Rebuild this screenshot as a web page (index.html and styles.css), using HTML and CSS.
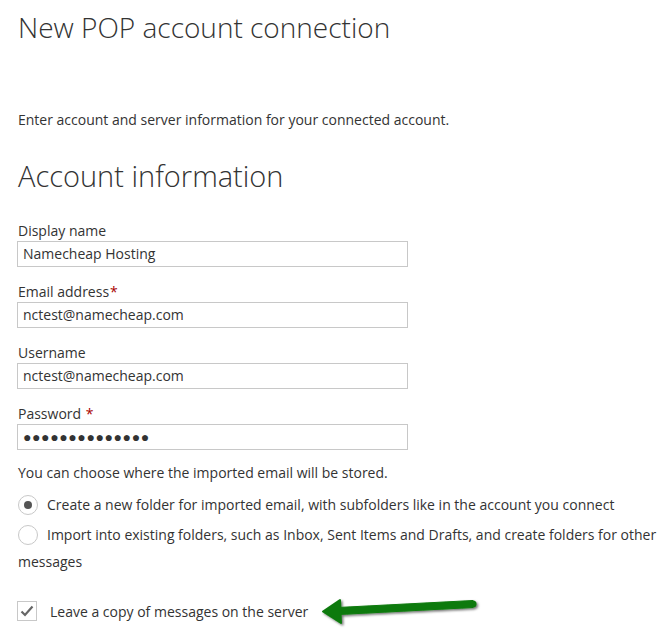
FILE: index.html
```html
<!DOCTYPE html>
<html lang="en">
<head>
  <meta charset="UTF-8" />
  <title>New POP account connection</title>
  <link rel="stylesheet" href="styles.css">
</head>
<body>
  <h1>New POP account connection</h1>
  <p class="intro">Enter account and server information for your connected account.</p>

  <h2>Account information</h2>
  <form class="form">
    <label class="field-label">Display name</label>
    <div class="input">Namecheap Hosting</div>

    <label class="field-label">Email address<span class="req">*</span></label>
    <div class="input">nctest@namecheap.com</div>

    <label class="field-label">Username</label>
    <div class="input">nctest@namecheap.com</div>

    <label class="field-label">Password <span class="req">*</span></label>
    <div class="input dots">&#9679;&#9679;&#9679;&#9679;&#9679;&#9679;&#9679;&#9679;&#9679;&#9679;&#9679;&#9679;&#9679;&#9679;</div>

    <p class="hint">You can choose where the imported email will be stored.</p>

    <div class="radio-row">
      <span class="radio checked"></span>
      <span>Create a new folder for imported email, with subfolders like in the account you connect</span>
    </div>
    <div class="radio-row">
      <span class="radio"></span>
      <span>Import into existing folders, such as Inbox, Sent Items and Drafts, and create folders for other</span>
    </div>
    <div class="wrap-line">messages</div>

    <div class="check-row">
      <span class="checkbox">
        <svg width="16" height="16" viewBox="0 0 16 16"><path d="M2.5 8.5 L6 12 L13.5 3.5" fill="none" stroke="#666" stroke-width="2.2"/></svg>
      </span>
      <span>Leave a copy of messages on the server</span>
      <svg class="arrow" width="162" height="32" viewBox="0 0 162 32">
        <defs>
          <filter id="sh" x="-10%" y="-40%" width="120%" height="180%">
            <feDropShadow dx="1.5" dy="1.5" stdDeviation="1.2" flood-color="#000" flood-opacity="0.55"/>
          </filter>
        </defs>
        <g filter="url(#sh)">
          <path d="M18 11.5 L153 4.5 L153 11.5 L19 18.5 Z" fill="#0b7a0b" stroke="#0b7a0b" stroke-width="1" stroke-linejoin="round"/>
          <circle cx="153" cy="8" r="3.5" fill="#0b7a0b"/>
          <path d="M3 15.5 L20 4 L21 27 Z" fill="#0b7a0b" stroke="#0b7a0b" stroke-width="2" stroke-linejoin="round"/>
        </g>
      </svg>
    </div>
  </form>
</body>
</html>
```
FILE: styles.css
```css
body {
  margin: 0;
  padding: 0 18px;
  font-family: "Open Sans", "Noto Sans", sans-serif;
  font-size: 14px;
  color: #333;
  background: #fff;
}
h1 {
  font-weight: 300;
  font-size: 28px;
  margin: 8px 0 0;
  line-height: 38px;
  color: #333;
}
.intro {
  margin: 64px 0 0;
  line-height: 20px;
}
h2 {
  font-weight: 300;
  font-size: 29px;
  margin: 28px 0 0;
  line-height: 36px;
  color: #333;
}
.form {
  margin-top: 27px;
}
.field-label {
  display: block;
  line-height: 20px;
  margin-top: 15px;
}
.field-label:first-child {
  margin-top: 0;
}
.req {
  color: #a80000;
  margin-left: 1px;
}
.input {
  width: 380px;
  height: 24px;
  margin-left: -1px;
  border: 1px solid #c8c8c8;
  padding: 0 4px 0 5px;
  line-height: 24px;
  color: #333;
}
.dots {
  font-size: 14px;
  letter-spacing: 0.6px;
  color: #333;
}
.hint {
  margin: 13px 0 0;
  line-height: 20px;
}
.radio-row {
  display: flex;
  align-items: center;
  gap: 9px;
  margin-top: 12px;
  line-height: 20px;
  white-space: nowrap;
}
.radio-row + .radio-row {
  margin-top: 10px;
}
.radio {
  width: 18px;
  height: 18px;
  border: 1px solid #c8c8c8;
  border-radius: 50%;
  display: flex;
  align-items: center;
  justify-content: center;
  flex: none;
}
.radio.checked::after {
  content: "";
  width: 8px;
  height: 8px;
  border-radius: 50%;
  background: #555;
}
.wrap-line {
  line-height: 20px;
  margin-top: 7px;
}
.check-row {
  display: flex;
  align-items: center;
  margin-top: 22px;
}
.checkbox {
  width: 18px;
  height: 18px;
  margin-left: -1px;
  border: 1px solid #c8c8c8;
  display: flex;
  align-items: center;
  justify-content: center;
  margin-right: 13px;
  flex: none;
}
.arrow {
  margin-left: 12px;
  margin-top: 2px;
}
```
